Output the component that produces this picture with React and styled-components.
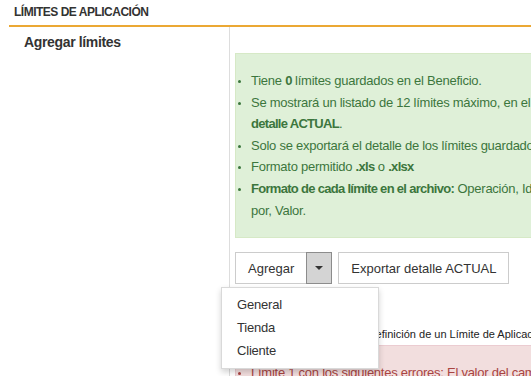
import React from "react";
import styled, { createGlobalStyle } from "styled-components";

const GlobalStyle = createGlobalStyle`
  html, body {
    margin: 0;
    padding: 0;
    background: #fff;
    overflow: hidden;
  }
  body {
    font-family: "Liberation Sans", Arial, sans-serif;
    color: #333;
  }
  b {
    letter-spacing: -0.7px;
  }
`;

const Page = styled.div`
  width: 640px;
  padding-left: 9px;
`;

const SectionTitle = styled.h4`
  margin: 0;
  padding: 5px 0 5px 5px;
  font-size: 12px;
  font-weight: bold;
  letter-spacing: -0.5px;
  text-transform: uppercase;
  color: #333;
  border-bottom: 2px solid #eba834;
  line-height: 15px;
`;

const Body = styled.div`
  display: flex;
`;

const LabelCol = styled.div`
  width: 205px;
  padding: 7px 0 0 15px;
  border-right: 1px solid #ddd;
  font-size: 14px;
  font-weight: bold;
  letter-spacing: -0.35px;
  color: #333;
  min-height: 360px;
`;

const ContentCol = styled.div`
  flex: 1;
  padding: 26px 23px 0 5px;
`;

const InfoBox = styled.div`
  background: #dff0d8;
  border: 1px solid #d6e9c6;
  color: #3c763d;
  padding: 16px 15px 16px 0;
  font-size: 13px;
  letter-spacing: -0.25px;
  line-height: 21.6px;
`;

const InfoList = styled.ul`
  margin: 0;
  padding: 0 0 0 15px;
  li::marker {
    font-size: 10px;
  }
`;

const NoWrap = styled.b`
  white-space: nowrap;
`;

const ErrorBox = styled(InfoBox)`
  background: #f2dede;
  border-color: #ebccd1;
  color: #a94442;
`;

const Toolbar = styled.div`
  display: flex;
  gap: 6px;
  margin-top: 14px;
`;

const Split = styled.div`
  display: flex;
  position: relative;
`;

const Button = styled.button`
  height: 32px;
  padding: 0 12px;
  background: #fff;
  border: 1px solid #ccc;
  font-family: inherit;
  font-size: 13px;
  color: #333;
  cursor: pointer;
`;

const CaretButton = styled(Button)`
  width: 26px;
  padding: 0;
  margin-left: -1px;
  background: #d4d4d4;
  border-color: #8c8c8c;
  display: flex;
  align-items: center;
  justify-content: center;
`;

const Caret = styled.span`
  width: 0;
  height: 0;
  border-left: 4px solid transparent;
  border-right: 4px solid transparent;
  border-top: 4px solid #333;
`;

const Menu = styled.ul`
  position: absolute;
  top: 35px;
  left: -14px;
  width: 158px;
  box-sizing: border-box;
  margin: 0;
  padding: 5px 0 6px;
  list-style: none;
  background: #fff;
  border: 1px solid rgba(0, 0, 0, 0.15);
  box-shadow: 0 3px 6px rgba(0, 0, 0, 0.18);
  z-index: 5;
`;

const MenuItem = styled.li`
  padding: 0 15px;
  font-size: 13px;
  letter-spacing: -0.2px;
  line-height: 23px;
  color: #333;
`;

const Note = styled.p`
  margin: 43px 0 4px;
  font-size: 11px;
  line-height: 14px;
  color: #222;
  white-space: nowrap;
`;

const menuItems = ["General", "Tienda", "Cliente"];

export default function App() {
  return (
    <>
      <GlobalStyle />
      <Page>
        <SectionTitle>Límites de aplicación</SectionTitle>
        <Body>
          <LabelCol>Agregar límites</LabelCol>
          <ContentCol>
            <InfoBox>
              <InfoList>
                <li>
                  Tiene <b>0</b> límites guardados en el Beneficio.
                </li>
                <li>
                  Se mostrará un listado de 12 límites máximo, en el{" "}
                  <NoWrap>detalle ACTUAL</NoWrap>.
                </li>
                <li>Solo se exportará el detalle de los límites guardados.</li>
                <li>
                  Formato permitido <b>.xls</b> o <b>.xlsx</b>
                </li>
                <li>
                  <b>Formato de cada límite en el archivo:</b> Operación, Id,
                  Agrupado por, Valor.
                </li>
              </InfoList>
            </InfoBox>
            <Toolbar>
              <Split>
                <Button>Agregar</Button>
                <CaretButton>
                  <Caret />
                </CaretButton>
                <Menu>
                  {menuItems.map((item) => (
                    <MenuItem key={item}>{item}</MenuItem>
                  ))}
                </Menu>
              </Split>
              <Button>Exportar detalle ACTUAL</Button>
            </Toolbar>
            <Note>
              Error en su archivo: falta la definición de un Límite de
              Aplicación.
            </Note>
            <ErrorBox>
              <InfoList>
                <li>
                  Límite 1 con los siguientes errores: El valor del campo
                  Operación es obligatorio.
                </li>
              </InfoList>
            </ErrorBox>
          </ContentCol>
        </Body>
      </Page>
    </>
  );
}
